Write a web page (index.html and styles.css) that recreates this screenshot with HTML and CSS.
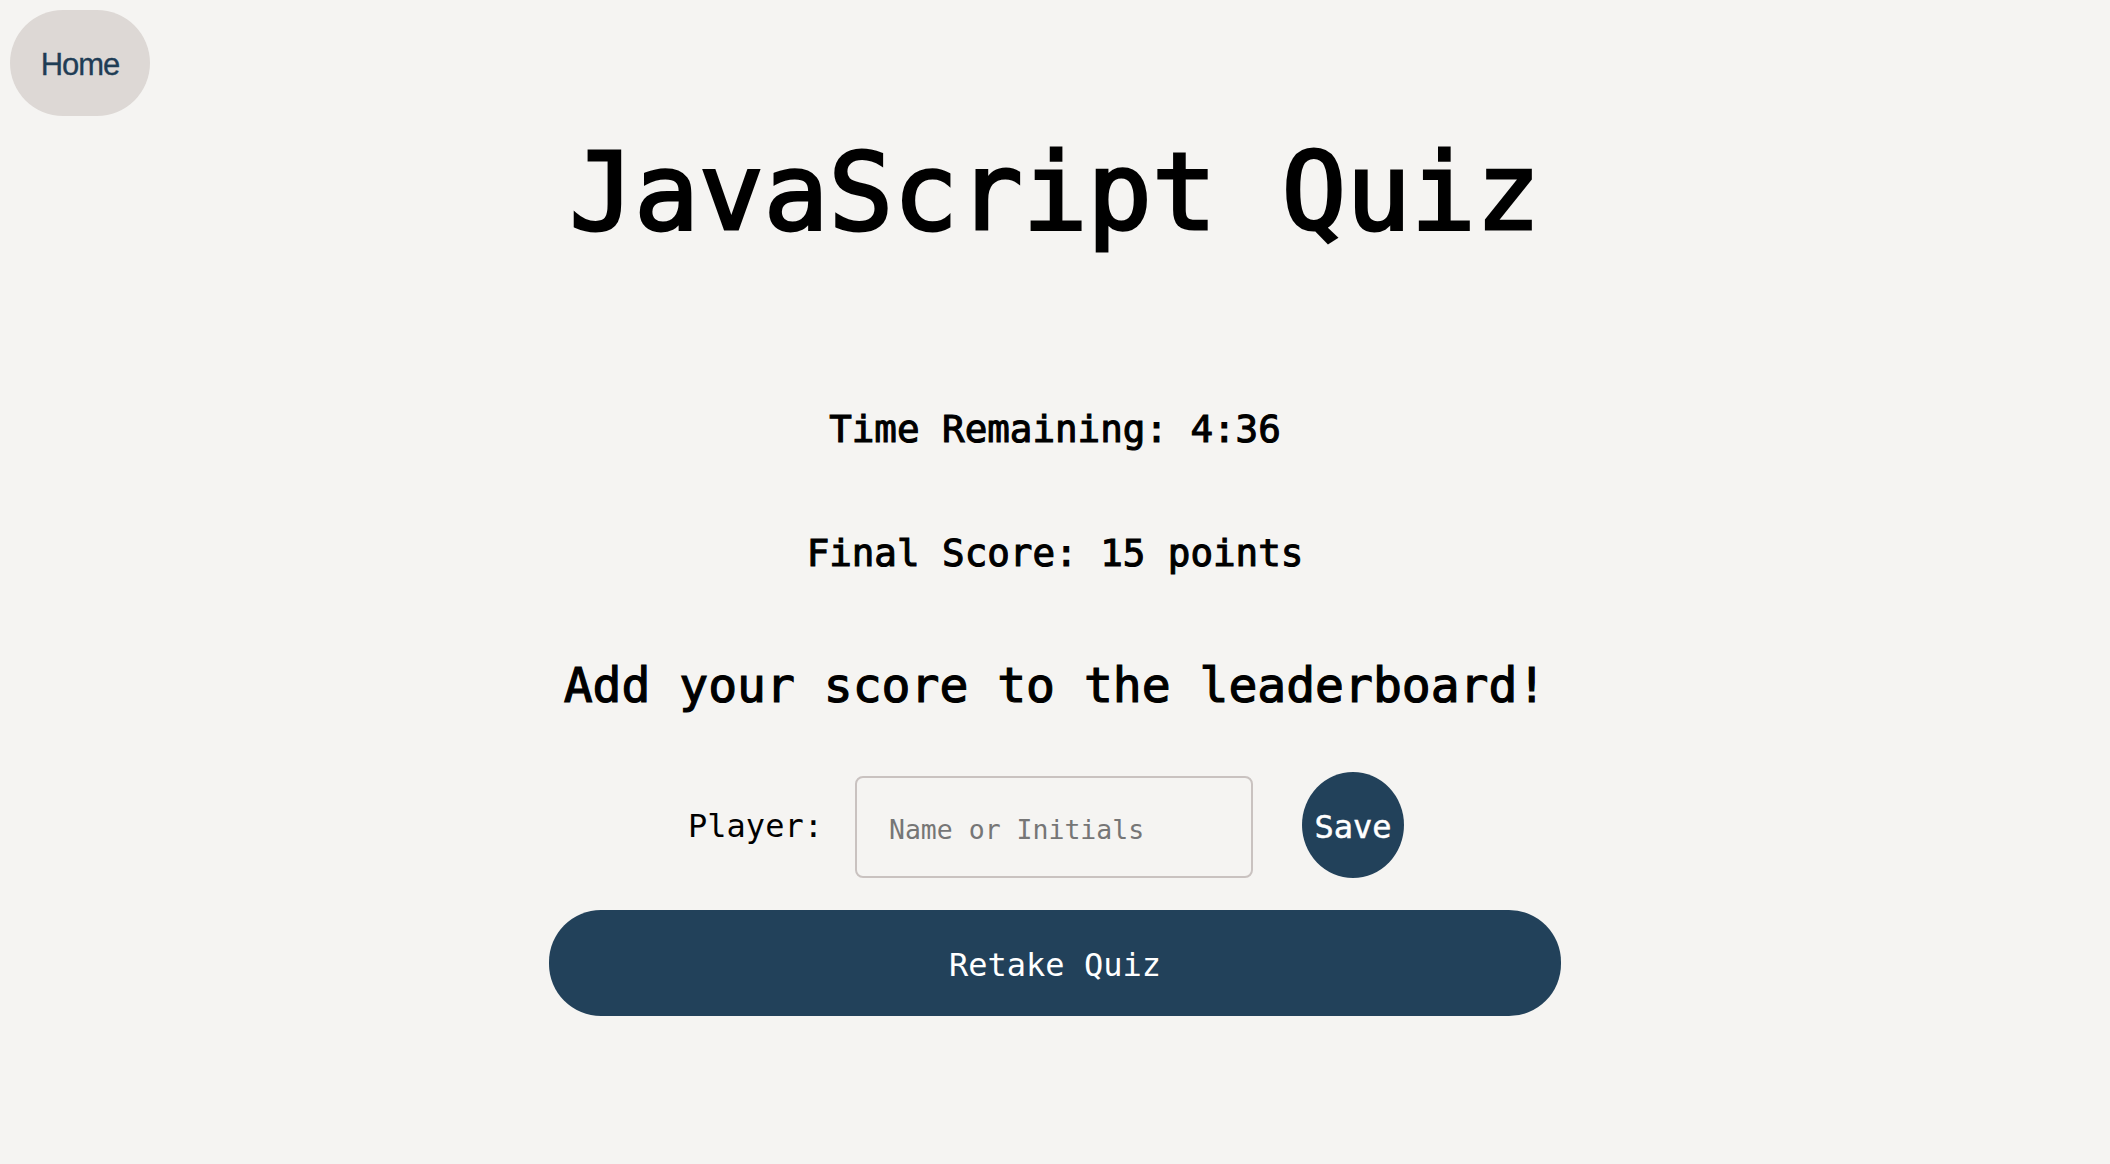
FILE: index.html
```html
<!DOCTYPE html>
<html lang="en">
<head>
<meta charset="utf-8">
<title>JavaScript Quiz</title>
<link rel="stylesheet" href="styles.css">
</head>
<body>
<header class="top">
  <button class="home-btn">Home</button>
</header>
<main class="quiz">
  <h1 class="title">JavaScript Quiz</h1>
  <p class="timer">Time Remaining: 4:36</p>
  <p class="score">Final Score: 15 points</p>
  <h2 class="prompt">Add your score to the leaderboard!</h2>
  <form class="entry">
    <label class="entry-label" for="player">Player:</label>
    <input class="entry-input" id="player" type="text" placeholder="Name or Initials">
    <button class="save-btn" type="button">Save</button>
  </form>
  <button class="retake-btn" type="button">Retake Quiz</button>
</main>
</body>
</html>
```
FILE: styles.css
```css
html, body {
  margin: 0;
  padding: 0;
  background: #f5f4f2;
}
body {
  font-family: "DejaVu Sans Mono", "Liberation Mono", monospace;
  color: #000;
}
.top {
  padding: 10px 10px 0;
  display: flex;
}
.home-btn {
  width: 140px;
  height: 106px;
  border: none;
  border-radius: 53px;
  background: #ddd8d5;
  color: #1f3d55;
  font-family: "Liberation Sans", Arial, sans-serif;
  font-size: 31px;
  padding: 4px 0 0;
  letter-spacing: -1px;
  -webkit-text-stroke: 0.3px #1f3d55;
}
.quiz {
  display: flex;
  flex-direction: column;
  align-items: center;
}
.title {
  margin: 22px 0 0;
  font-size: 107.5px;
  line-height: 107px;
  font-weight: 400;
  -webkit-text-stroke: 3px #000;
}
.timer, .score {
  font-size: 37.5px;
  line-height: 38px;
  margin: 0;
  font-weight: 400;
  -webkit-text-stroke: 1.1px #000;
}
.timer { margin-top: 165px; }
.score { margin-top: 86px; }
.prompt {
  margin: 89px 0 0;
  font-size: 48px;
  line-height: 48px;
  font-weight: 400;
  -webkit-text-stroke: 1.2px #000;
}
.entry {
  margin-top: 63px;
  display: flex;
  align-items: center;
  justify-content: center;
  padding-right: 18px;
}
.entry-label {
  font-size: 32px;
  line-height: 32px;
  margin-right: 32px;
  padding-top: 2px;
}
.entry-input {
  width: 398px;
  height: 102px;
  box-sizing: border-box;
  border: 2px solid #c9c2c0;
  border-radius: 8px;
  background: transparent;
  padding: 4px 32px 0;
  font-family: "DejaVu Sans Mono", "Liberation Mono", monospace;
  font-size: 26.5px;
  margin-top: 4px;
}
.entry-input::placeholder {
  color: #767676;
}
.save-btn {
  margin-left: 49px;
  width: 102px;
  height: 106px;
  border: none;
  border-radius: 50%;
  background: #22415a;
  color: #fff;
  font-family: "DejaVu Sans Mono", "Liberation Mono", monospace;
  font-size: 32px;
  padding: 3px 0 0;
  -webkit-text-stroke: 0.5px #fff;
}
.retake-btn {
  margin-top: 32px;
  width: 1012px;
  height: 106px;
  border: none;
  border-radius: 52px;
  background: #22415a;
  color: #fff;
  font-family: "DejaVu Sans Mono", "Liberation Mono", monospace;
  font-size: 32px;
  padding: 4px 0 0;
}
```
